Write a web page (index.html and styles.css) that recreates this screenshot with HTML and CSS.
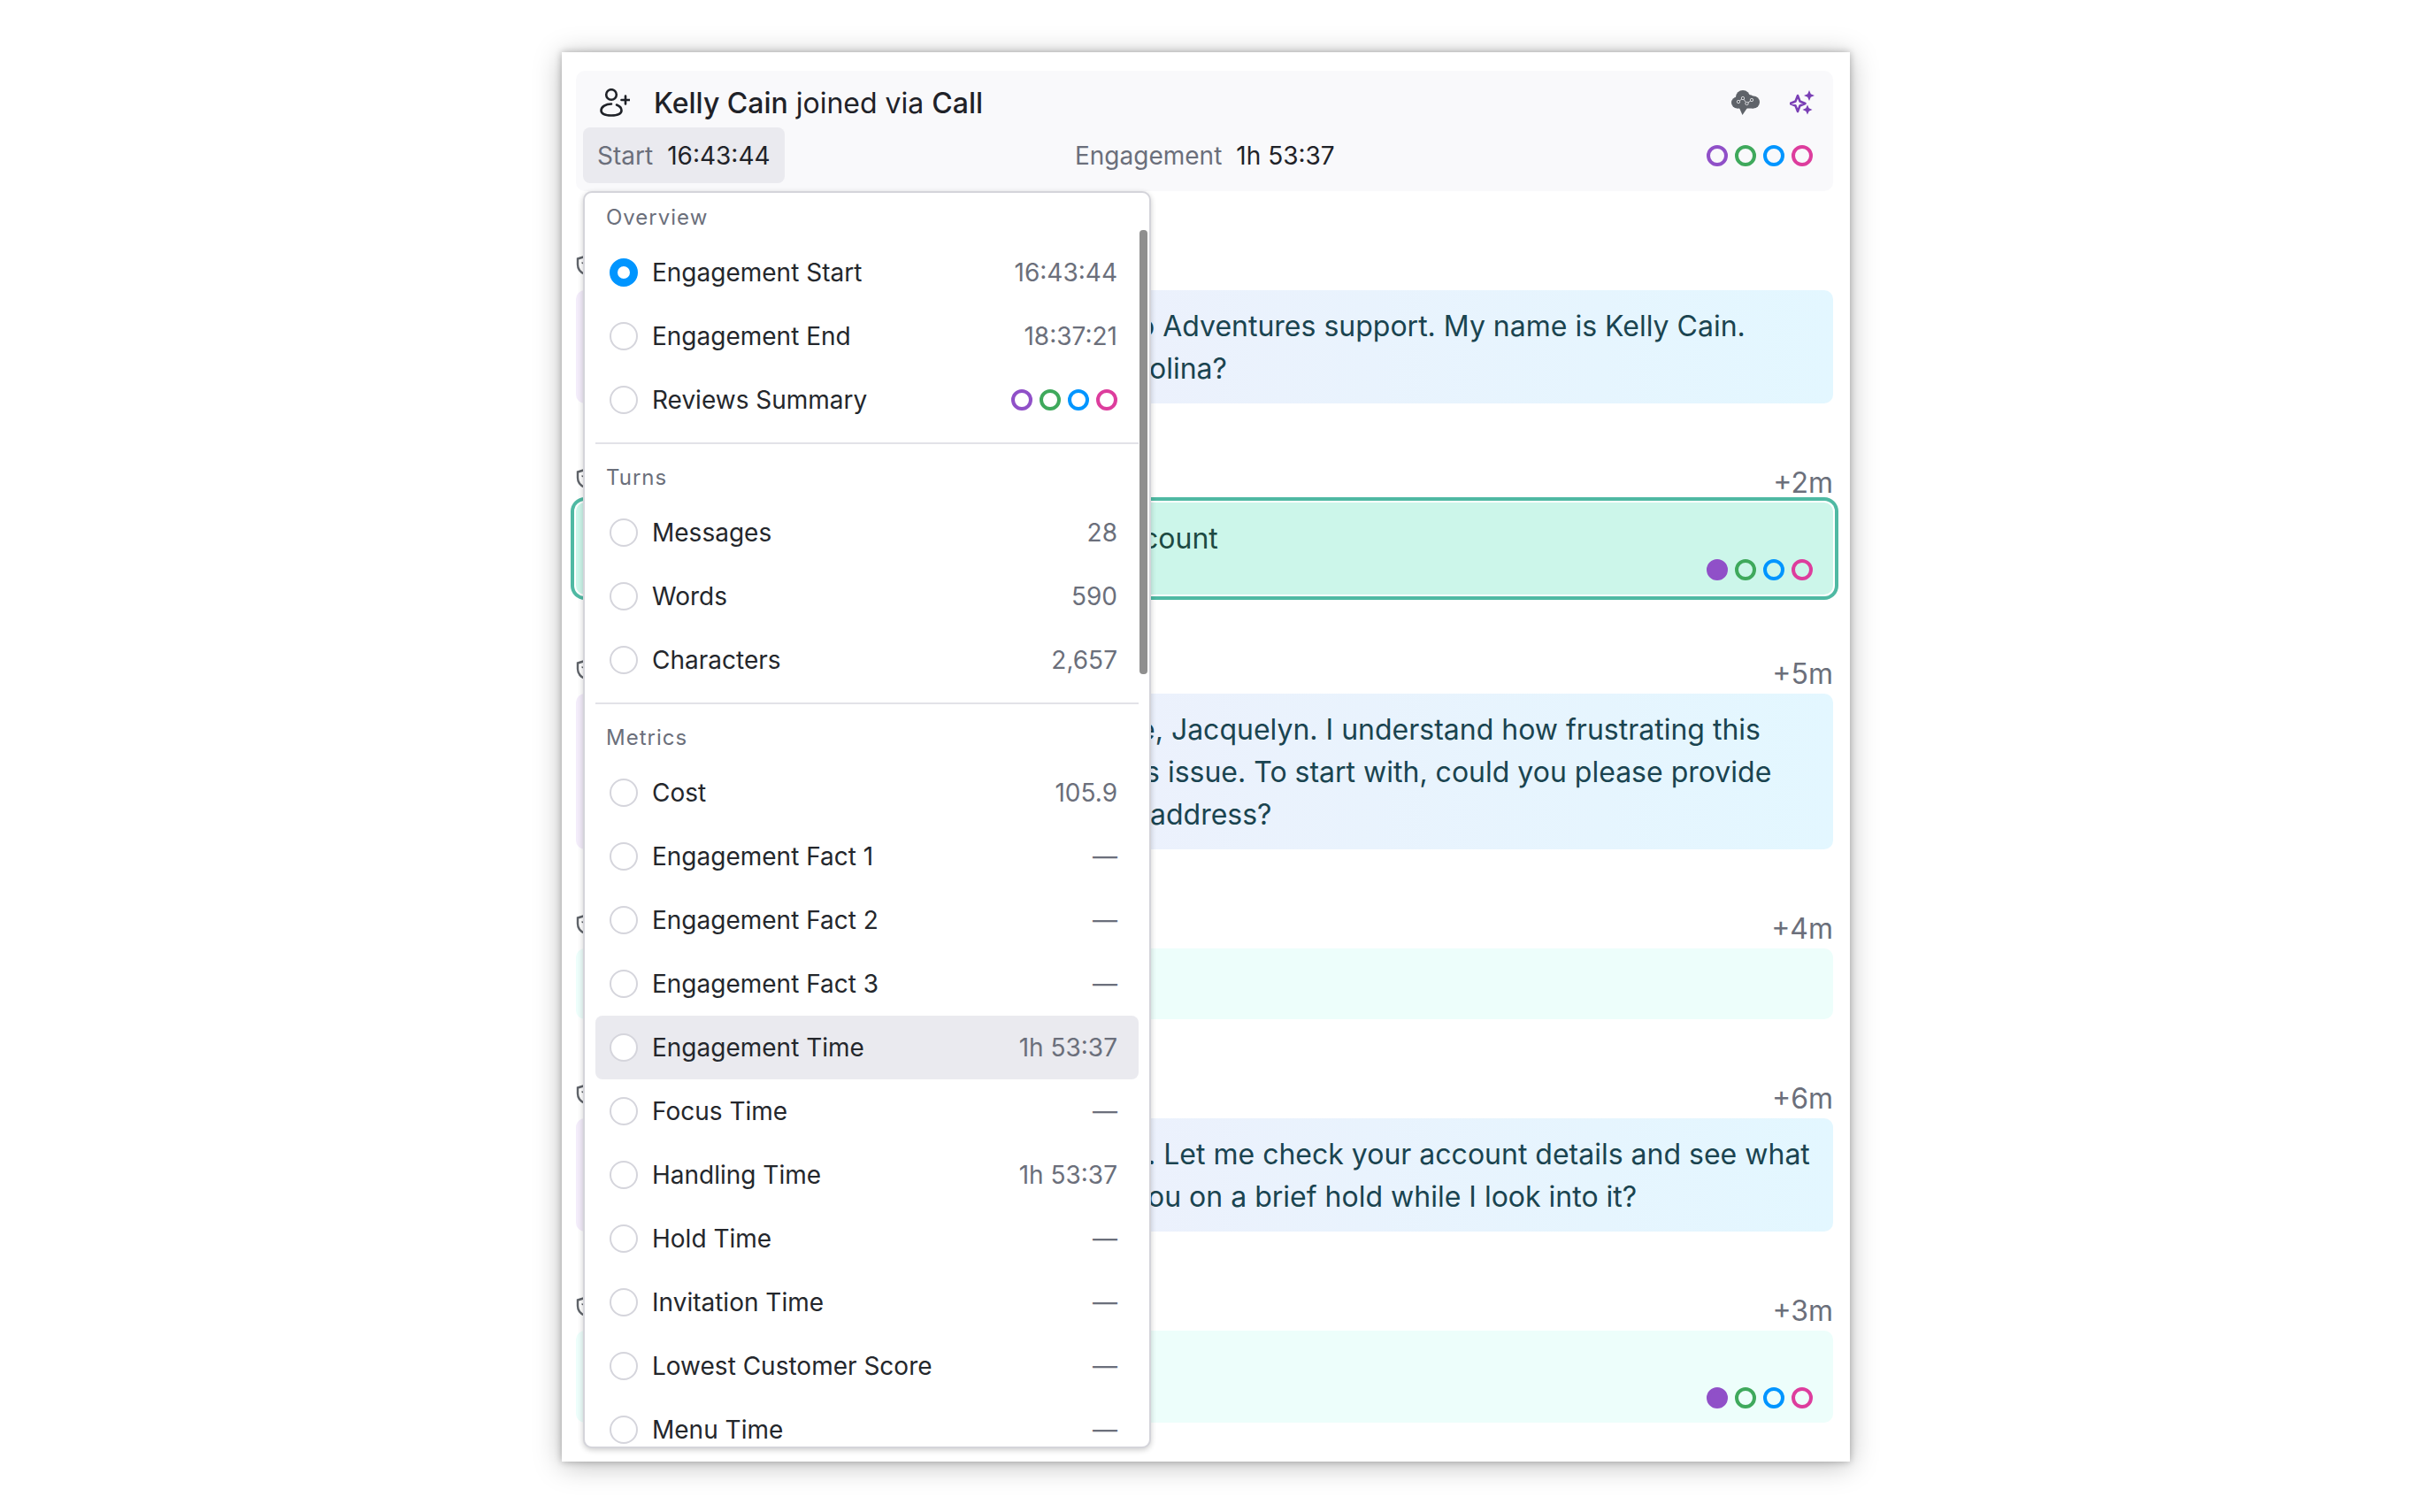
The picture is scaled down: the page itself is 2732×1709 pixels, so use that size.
FILE: index.html
```html
<!DOCTYPE html>
<html lang="en">
<head>
<meta charset="utf-8">
<title>Engagement</title>
<link rel="stylesheet" href="styles.css">
</head>
<body>
<main class="window">
  <header class="summary">
    <div class="title-row">
      <svg class="user-icon" viewBox="0 0 34 32" fill="none" stroke="#1f2228" stroke-width="2.6" stroke-linecap="round"><circle cx="13" cy="7" r="5.8"/><path d="M13 17.5c-6.5 0-11.5 3.3-11.5 7.3 0 3.6 4.4 5.7 11.5 5.700s11.500-2.100 11.500-5.700c0-2.800-2.200-5-5.500-6.300"/><path d="M29 8.500v9M24.500 13h9"/></svg>
      <h1 class="title"><b>Kelly Cain</b> joined via <b>Call</b></h1>
      <svg class="cloud-icon" viewBox="0 0 32 28"><g fill="#5f6369"><circle cx="13" cy="8" r="8"/><circle cx="6.500" cy="14" r="6.500"/><circle cx="25" cy="13.500" r="7"/><circle cx="20" cy="12" r="7"/><rect x="6.500" y="12" width="18.500" height="8.500"/><path d="M9 20h9L12.500 28z"/></g><path d="M8 13 13 9 17.500 15 23 11" fill="none" stroke="#d6d7da" stroke-width="1"/><g fill="#5f6369" stroke="#d6d7da" stroke-width="1"><circle cx="8" cy="13" r="1.700"/><circle cx="13" cy="9" r="1.700"/><circle cx="17.500" cy="15" r="1.700"/><circle cx="23" cy="11" r="1.700"/></g></svg>
      <svg class="spark-icon" viewBox="0 0 28 28"><path d="M9 6 11.500 12.500 17.500 15 11.500 17.500 9 24 6.500 17.500 0.500 15 6.500 12.500Z" fill="none" stroke="#7a3fb5" stroke-width="2.500" stroke-linejoin="round"/><path d="M22 0 23.800 4.200 28 6 23.800 7.800 22 12 20.200 7.800 16 6 20.200 4.200Z" fill="#7a3fb5"/><path d="M20 16.500 21.700 20.300 25.500 22 21.700 23.700 20 27.500 18.300 23.700 14.500 22 18.300 20.300Z" fill="#7a3fb5"/></svg>
    </div>
    <div class="stat-row">
      <div class="stat stat-active"><span class="stat-name">Start</span><span class="stat-value">16:43:44</span></div>
      <div class="stat"><span class="stat-name">Engagement</span><span class="stat-value">1h 53:37</span></div>
      <div class="dots"><i class="dot purple"></i><i class="dot green"></i><i class="dot blue"></i><i class="dot pink"></i></div>
    </div>
  </header>

  <section class="messages">
    <article class="message">
      <div class="message-head"><svg class="shield" viewBox="0 0 20 24" fill="none" stroke="#5f6369" stroke-width="2.400"><path d="M10 2 2 4.500V11c0 5 3.500 9 8 11 4.500-2 8-6 8-11V4.500z"/><path d="M6.500 9c1.500 0 2.500 1 2.500 2.500" stroke-width="1.500"/></svg></div>
      <div class="bubble agent">
        <span class="line i1">o Adventures support. My name is Kelly Cain.</span>
        <span class="line i2">olina?</span>
      </div>
    </article>
    <article class="message">
      <div class="message-head"><svg class="shield" viewBox="0 0 20 24" fill="none" stroke="#5f6369" stroke-width="2.400"><path d="M10 2 2 4.500V11c0 5 3.500 9 8 11 4.500-2 8-6 8-11V4.500z"/><path d="M6.500 9c1.500 0 2.500 1 2.500 2.500" stroke-width="1.500"/></svg><span class="elapsed">+2m</span></div>
      <div class="bubble customer selected">
        <span class="line i3">count</span>
        <div class="dots"><i class="dot purple filled"></i><i class="dot green"></i><i class="dot blue"></i><i class="dot pink"></i></div>
      </div>
    </article>
    <article class="message">
      <div class="message-head"><svg class="shield" viewBox="0 0 20 24" fill="none" stroke="#5f6369" stroke-width="2.400"><path d="M10 2 2 4.500V11c0 5 3.500 9 8 11 4.500-2 8-6 8-11V4.500z"/><path d="M6.500 9c1.500 0 2.500 1 2.500 2.500" stroke-width="1.500"/></svg><span class="elapsed">+5m</span></div>
      <div class="bubble agent">
        <span class="line i4">e, Jacquelyn. I understand how frustrating this</span>
        <span class="line i5">s issue. To start with, could you please provide</span>
        <span class="line i6">address?</span>
      </div>
    </article>
    <article class="message">
      <div class="message-head"><svg class="shield" viewBox="0 0 20 24" fill="none" stroke="#5f6369" stroke-width="2.400"><path d="M10 2 2 4.500V11c0 5 3.500 9 8 11 4.500-2 8-6 8-11V4.500z"/><path d="M6.500 9c1.500 0 2.500 1 2.500 2.500" stroke-width="1.500"/></svg><span class="elapsed">+4m</span></div>
      <div class="bubble customer">
        <span class="line"></span>
      </div>
    </article>
    <article class="message">
      <div class="message-head"><svg class="shield" viewBox="0 0 20 24" fill="none" stroke="#5f6369" stroke-width="2.400"><path d="M10 2 2 4.500V11c0 5 3.500 9 8 11 4.500-2 8-6 8-11V4.500z"/><path d="M6.500 9c1.500 0 2.500 1 2.500 2.500" stroke-width="1.500"/></svg><span class="elapsed">+6m</span></div>
      <div class="bubble agent">
        <span class="line i7">. Let me check your account details and see what</span>
        <span class="line i8">ou on a brief hold while I look into it?</span>
      </div>
    </article>
    <article class="message">
      <div class="message-head"><svg class="shield" viewBox="0 0 20 24" fill="none" stroke="#5f6369" stroke-width="2.400"><path d="M10 2 2 4.500V11c0 5 3.500 9 8 11 4.500-2 8-6 8-11V4.500z"/><path d="M6.500 9c1.500 0 2.500 1 2.500 2.500" stroke-width="1.500"/></svg><span class="elapsed">+3m</span></div>
      <div class="bubble customer">
        <span class="line"></span>
        <div class="dots"><i class="dot purple filled"></i><i class="dot green"></i><i class="dot blue"></i><i class="dot pink"></i></div>
      </div>
    </article>
  </section>

  <aside class="menu">
    <div class="menu-scroll">
      <div class="menu-label">Overview</div>
      <div class="menu-row"><i class="radio checked"></i><span class="row-name">Engagement Start</span><span class="row-value">16:43:44</span></div>
      <div class="menu-row"><i class="radio"></i><span class="row-name">Engagement End</span><span class="row-value">18:37:21</span></div>
      <div class="menu-row"><i class="radio"></i><span class="row-name">Reviews Summary</span><span class="dots"><i class="dot purple"></i><i class="dot green"></i><i class="dot blue"></i><i class="dot pink"></i></span></div>
      <hr class="menu-divider">
      <div class="menu-label">Turns</div>
      <div class="menu-row"><i class="radio"></i><span class="row-name">Messages</span><span class="row-value">28</span></div>
      <div class="menu-row"><i class="radio"></i><span class="row-name">Words</span><span class="row-value">590</span></div>
      <div class="menu-row"><i class="radio"></i><span class="row-name">Characters</span><span class="row-value">2,657</span></div>
      <hr class="menu-divider">
      <div class="menu-label">Metrics</div>
      <div class="menu-row"><i class="radio"></i><span class="row-name">Cost</span><span class="row-value">105.9</span></div>
      <div class="menu-row"><i class="radio"></i><span class="row-name">Engagement Fact 1</span><span class="row-value">—</span></div>
      <div class="menu-row"><i class="radio"></i><span class="row-name">Engagement Fact 2</span><span class="row-value">—</span></div>
      <div class="menu-row"><i class="radio"></i><span class="row-name">Engagement Fact 3</span><span class="row-value">—</span></div>
      <div class="menu-row hover"><i class="radio"></i><span class="row-name">Engagement Time</span><span class="row-value">1h 53:37</span></div>
      <div class="menu-row"><i class="radio"></i><span class="row-name">Focus Time</span><span class="row-value">—</span></div>
      <div class="menu-row"><i class="radio"></i><span class="row-name">Handling Time</span><span class="row-value">1h 53:37</span></div>
      <div class="menu-row"><i class="radio"></i><span class="row-name">Hold Time</span><span class="row-value">—</span></div>
      <div class="menu-row"><i class="radio"></i><span class="row-name">Invitation Time</span><span class="row-value">—</span></div>
      <div class="menu-row"><i class="radio"></i><span class="row-name">Lowest Customer Score</span><span class="row-value">—</span></div>
      <div class="menu-row"><i class="radio"></i><span class="row-name">Menu Time</span><span class="row-value">—</span></div>
    </div>
    <div class="scroll-thumb"></div>
  </aside>
</main>
</body>
</html>
```
FILE: styles.css
```css
* { box-sizing: border-box; }
html, body { margin: 0; background: #fff; }
body {
  width: 2732px;
  height: 1709px;
  padding: 59px 0 0 635px;
  overflow: hidden;
  font-family: Inter, "Noto Sans", sans-serif;
  color: #1f2228;
}
.window {
  position: relative;
  width: 1456px;
  height: 1593px;
  padding: 21px 19px 0 16px;
  background: #fff;
  box-shadow: 0 0 8px rgba(0, 0, 0, .28), 0 4px 30px rgba(0, 0, 0, .26);
}

.summary {
  height: 136px;
  padding: 8px;
  background: #f9f9fb;
  border-radius: 10px;
}
.title-row {
  display: flex;
  align-items: center;
  height: 56px;
  padding: 0 13px 0 19px;
}
.user-icon { width: 34px; height: 32px; margin-right: 27px; }
.title { flex: 1; height: 56px; margin: 0; font-size: 32px; font-weight: 400; line-height: 58px; color: #1f2228; }
.title b { font-weight: 500; }
.cloud-icon { width: 32px; height: 28px; margin-right: 34px; }
.spark-icon { width: 28px; height: 28px; }

.stat-row {
  display: grid;
  grid-template-columns: 540px 1fr auto;
  align-items: center;
  height: 63px;
}
.stat {
  display: flex;
  align-items: center;
  justify-self: start;
  gap: 16px;
  height: 63px;
  padding: 0 16px;
  border-radius: 8px;
  font-size: 28px;
}
.stat-active { background: #eaeaef; }
.stat-name { color: #6b6f7b; }
.stat-value { color: #1f2228; }
.stat-row > .dots { padding-right: 15px; }

.dots { display: flex; justify-content: flex-end; gap: 8px; }
.dot {
  display: block;
  width: 24px;
  height: 24px;
  border: 4px solid currentColor;
  border-radius: 50%;
}
.dot.filled { background: currentColor; }
.purple { color: #9050c8; }
.green { color: #3fa95c; }
.blue { color: #0095ff; }
.pink { color: #dd3d9d; }

.messages {
  display: flex;
  flex-direction: column;
  gap: 67px;
  padding-top: 66px;
}
.message-head {
  display: flex;
  justify-content: space-between;
  align-items: center;
  height: 45px;
}
.message:first-child .message-head { height: 46px; }
.shield { width: 20px; height: 24px; margin: -10px 0 0 0; }
.elapsed { margin-left: auto; font-size: 32px; color: #6b6f7b; }
.bubble {
  padding: 16px 23px 16px 26px;
  border-radius: 10px;
  font-size: 32px;
  line-height: 50px;
}
.bubble .dots { height: 24px; }
.line { display: block; height: 48px; white-space: nowrap; }
.i1 { text-indent: 609px; }
.i2 { text-indent: 622px; }
.i3 { text-indent: 614px; }
.i4 { text-indent: 610px; }
.i5 { text-indent: 617px; }
.i6 { text-indent: 623px; }
.i7 { text-indent: 620px; }
.i8 { text-indent: 620px; }
.agent { background: linear-gradient(90deg, #f3ecfa, #e3f7ff); color: #1a4450; }
.customer { background: #edfefb; color: #1d4a42; }
.selected { background: #ccf6ea; box-shadow: 0 0 0 2px #fff, 0 0 0 6px #4fb9a3; }

.menu {
  position: absolute;
  top: 157px;
  left: 24px;
  width: 642px;
  height: 1421px;
  padding: 0 12px;
  background: #fff;
  border: 2px solid #d4d4da;
  border-radius: 10px;
  box-shadow: 0 2px 6px rgba(0, 0, 0, .2);
  overflow: hidden;
}
.menu-label {
  display: flex;
  align-items: center;
  height: 54px;
  padding-left: 12px;
  font-size: 24px;
  letter-spacing: 1px;
  color: #6b6f7b;
}
.menu-row {
  display: flex;
  align-items: center;
  height: 72px;
  padding: 0 24px 0 16px;
  border-radius: 8px;
  font-size: 28px;
}
.menu-row.hover { background: #eaeaef; }
.radio {
  flex: none;
  width: 32px;
  height: 32px;
  margin-right: 16px;
  background: #fff;
  border: 2px solid #d5d5dc;
  border-radius: 50%;
}
.radio.checked { border: 9px solid #0095ff; }
.row-name { flex: 1; color: #24272c; }
.row-value { color: #6b6f7b; }
.menu-divider {
  height: 2px;
  margin: 12px 0 10px;
  border: 0;
  background: #e2e2e8;
}
.scroll-thumb {
  position: absolute;
  top: 42px;
  right: 2px;
  width: 9px;
  height: 502px;
  background: #8f8f8f;
  border-radius: 4px;
}
```
